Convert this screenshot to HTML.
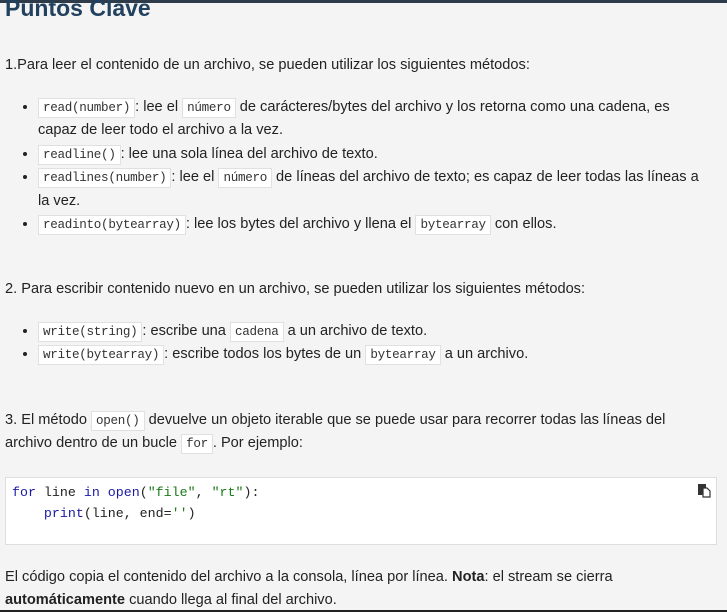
<!DOCTYPE html>
<html><head><meta charset="utf-8"><style>
html,body{margin:0;padding:0;}
body{width:727px;height:612px;overflow:hidden;background:#f4f4f4;font-family:"Liberation Sans",sans-serif;font-size:14.6px;color:#222;position:relative;}
.top{position:absolute;left:0;top:0;width:727px;height:3px;background:#2d3b4a;}
.bot{position:absolute;left:0;top:610px;width:727px;height:2px;background:#222;}
h1{position:absolute;left:5px;top:-5px;margin:0;font-size:23px;font-weight:bold;color:#22415f;}
.p{position:absolute;left:5px;line-height:23px;white-space:nowrap;}
ul{position:absolute;left:0;margin:0;padding-left:38px;line-height:23.4px;width:689px;white-space:nowrap;}
li{margin:0;}
code{font-family:"Liberation Mono",monospace;font-size:12.6px;letter-spacing:-0.3px;line-height:1;background:#fff;border:1px solid #e0e0e0;padding:2px 4px;color:#333;}
.box{position:absolute;left:5px;top:477px;width:712px;height:68px;background:#fff;border:1px solid #ddd;box-sizing:border-box;}
pre{margin:0;position:absolute;left:6px;top:4px;font-family:"Liberation Mono",monospace;font-size:13.3px;line-height:21px;color:#222;}
.k{color:#1a1aa6}.s{color:#1a7a1a}
</style></head><body>
<div class="top"></div>
<h1>Puntos Clave</h1>
<div class="p" style="top:54px">1.Para leer el contenido de un archivo, se pueden utilizar los siguientes métodos:</div>
<ul style="top:96px">
<li><code>read(number)</code>: lee el <code>número</code> de carácteres/bytes del archivo y los retorna como una cadena, es<br>capaz de leer todo el archivo a la vez.</li>
<li><code>readline()</code>: lee una sola línea del archivo de texto.</li>
<li><code>readlines(number)</code>: lee el <code>número</code> de líneas del archivo de texto; es capaz de leer todas las líneas a<br>la vez.</li>
<li><code>readinto(bytearray)</code>: lee los bytes del archivo y llena el <code>bytearray</code> con ellos.</li>
</ul>
<div class="p" style="top:278px">2. Para escribir contenido nuevo en un archivo, se pueden utilizar los siguientes métodos:</div>
<ul style="top:320px">
<li><code>write(string)</code>: escribe una <code>cadena</code> a un archivo de texto.</li>
<li><code>write(bytearray)</code>: escribe todos los bytes de un <code>bytearray</code> a un archivo.</li>
</ul>
<div class="p" style="top:409px">3. El método <code>open()</code> devuelve un objeto iterable que se puede usar para recorrer todas las líneas del</div>
<div class="p" style="top:432px">archivo dentro de un bucle <code>for</code>. Por ejemplo:</div>
<div class="box"><pre><span class="k">for</span> line <span class="k">in</span> <span class="k">open</span>(<span class="s">"file"</span>, <span class="s">"rt"</span>):
    <span class="k">print</span>(line, end=<span class="s">''</span>)</pre>
<svg style="position:absolute;left:691px;top:5px" width="14" height="15" viewBox="0 0 14 15"><rect x="1" y="1" width="8" height="11" fill="#333"/><path d="M6 5h4l3 3v6H6z" fill="#fff" stroke="#333" stroke-width="1.2"/></svg></div>
<div class="p" style="top:566px">El código copia el contenido del archivo a la consola, línea por línea. <b>Nota</b>: el stream se cierra</div>
<div class="p" style="top:589px"><b>automáticamente</b> cuando llega al final del archivo.</div>
<div class="bot"></div>
</body></html>
